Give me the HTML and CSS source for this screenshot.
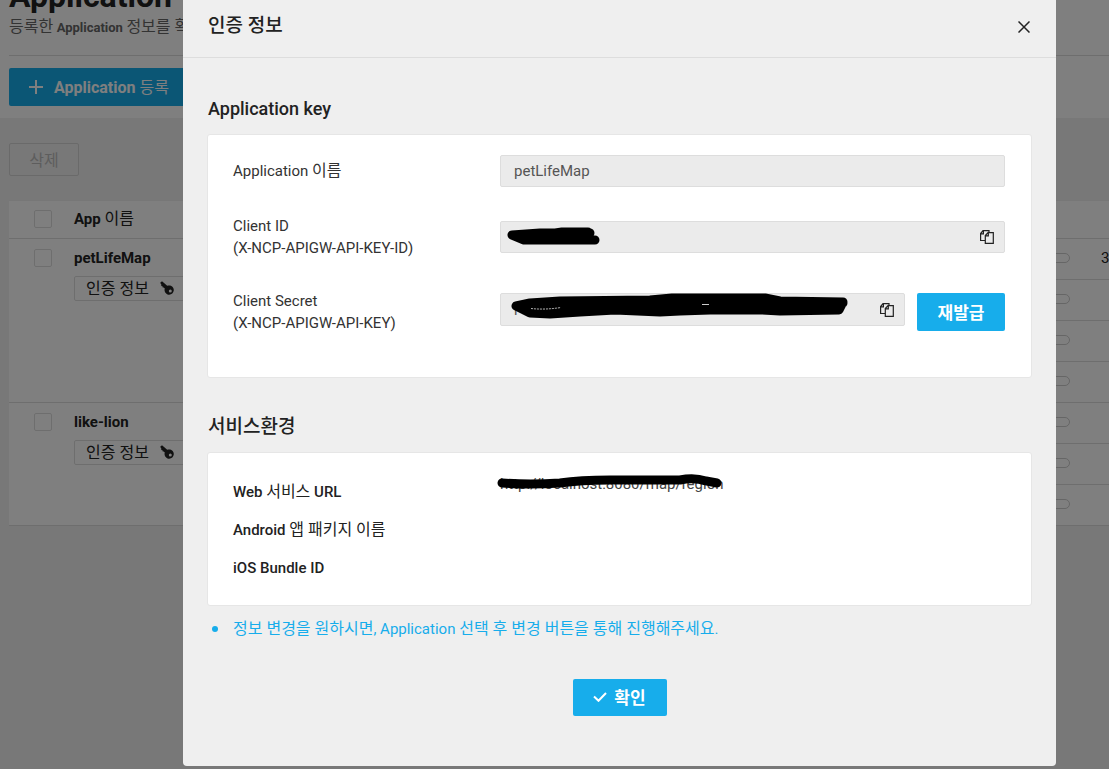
FILE: index.html
```html
<!DOCTYPE html>
<html lang="ko">
<head>
<meta charset="utf-8">
<title>Application</title>
<link rel="stylesheet" href="styles.css">
</head>
<body>
<svg class="sprite" aria-hidden="true">
  <symbol id="copy" viewBox="0 0 14 14">
    <path d="M5 10.500H.6V3.500L3 .7H9V3M.6 3.800H3.400V.7M5.300 13.300V5.500L8 2.700H13.300V13.300ZM5.300 5.900H8.300V2.700" fill="none" stroke="currentColor" stroke-width="1.200"/>
  </symbol>
  <symbol id="key" viewBox="0 0 14 14">
    <path fill="currentColor" fill-rule="evenodd" d="M.2 1.8 2 .2 7.2 4.7C10.800 3.500 14 6 13.800 9.300 13.500 12.500 10.500 14.500 7.500 13.400 4.900 12.400 4 9.800 4.800 7.400L3.700 6.400 2.700 6.600 2.500 5.200 1.200 5.100 1.400 3.700ZM10.300 8.600A1.500 1.500 0 1 0 10.300 11.600 1.500 1.500 0 1 0 10.300 8.600Z"/>
  </symbol>
</svg>

<main class="page">
  <header class="page-head">
    <h1 class="page-title">Application</h1>
    <p class="page-desc"><span class="ko">등록한</span> <b>Application</b> <span class="ko">정보를 확인</span></p>
    <div class="toolbar">
      <button class="btn btn-register" type="button">
        <svg class="icon-plus" viewBox="0 0 14 14" aria-hidden="true"><path d="M7 0V14M0 7H14" stroke="currentColor" stroke-width="2"/></svg>
        <span>Application <span class="regular">등록</span></span>
      </button>
    </div>
  </header>
  <div class="list">
    <button class="btn-delete" type="button" disabled>삭제</button>
    <table class="apps">
      <colgroup><col class="col-check"><col class="col-name"><col><col class="col-usage"><col class="col-count"></colgroup>
      <thead>
        <tr><th><input type="checkbox" class="check" aria-label="전체 선택"></th><th>App <span class="ko">이름</span></th><th></th><th></th><th></th></tr>
      </thead>
      <tbody>
        <tr>
          <td rowspan="4"><input type="checkbox" class="check" aria-label="petLifeMap"></td>
          <td rowspan="4"><div class="app-name">petLifeMap</div><button class="btn-auth" type="button">인증 정보 <svg class="icon-key" aria-hidden="true"><use href="#key"/></svg></button></td>
          <td></td><td><div class="usage"></div></td><td>3</td>
        </tr>
        <tr><td></td><td><div class="usage"></div></td><td></td></tr>
        <tr><td></td><td><div class="usage"></div></td><td></td></tr>
        <tr><td></td><td><div class="usage"></div></td><td></td></tr>
        <tr>
          <td rowspan="3"><input type="checkbox" class="check" aria-label="like-lion"></td>
          <td rowspan="3"><div class="app-name">like-lion</div><button class="btn-auth" type="button">인증 정보 <svg class="icon-key" aria-hidden="true"><use href="#key"/></svg></button></td>
          <td></td><td><div class="usage"></div></td><td></td>
        </tr>
        <tr><td></td><td><div class="usage"></div></td><td></td></tr>
        <tr><td></td><td><div class="usage"></div></td><td></td></tr>
      </tbody>
    </table>
  </div>
</main>

<div class="overlay">
  <section class="modal" role="dialog" aria-labelledby="modal-title">
    <header class="modal-head">
      <h2 class="modal-title" id="modal-title">인증 정보</h2>
      <button class="btn-close" type="button" aria-label="닫기"><svg viewBox="0 0 12 12" aria-hidden="true"><path d="M.5.5 11.500 11.500M11.500.5.5 11.500" stroke="currentColor" stroke-width="1.500"/></svg></button>
    </header>
    <div class="modal-body">
      <h3 class="section-title">Application key</h3>
      <div class="card card-keys">
        <div class="row">
          <label for="app-name">Application <span class="ko">이름</span></label>
          <div class="field"><input class="text" id="app-name" value="petLifeMap" readonly></div>
        </div>
        <div class="row">
          <label for="client-id">Client ID<br>(X-NCP-APIGW-API-KEY-ID)</label>
          <div class="field">
            <input class="text" id="client-id" value="" readonly>
            <svg class="redaction redaction-id" viewBox="0 0 110 32" aria-hidden="true"><path d="M12 14 40 12 90 12M12 14 24 19 95 19M40 16H88M35 15 62 11 88 11" fill="none" stroke="#000" stroke-width="9" stroke-linecap="round" stroke-linejoin="round"/></svg>
            <button class="btn-copy" type="button" aria-label="Client ID 복사"><svg aria-hidden="true"><use href="#copy"/></svg></button>
          </div>
        </div>
        <div class="row row-secret">
          <label for="client-secret">Client Secret<br>(X-NCP-APIGW-API-KEY)</label>
          <div class="secret">
            <div class="field">
              <input class="text" id="client-secret" value="r" readonly>
              <svg class="redaction redaction-secret" viewBox="0 0 360 32" aria-hidden="true">
                <path d="M16 13 30 10 60 8 150 7 172 5 265 5 280 8 343 9 339 17 280 18 262 17 210 17 180 18 160 19 115 17 80 19 50 21 30 20 24 17 16 13ZM24 15 343 10M30 14H280" fill="#000" stroke="#000" stroke-width="9" stroke-linecap="round" stroke-linejoin="round"/>
                <path d="M202 11.500H209" fill="none" stroke="#ccc"/>
                <path d="M31 15.500Q45 17 61 14.500" fill="none" stroke="#bbb" stroke-dasharray="2 1"/>
              </svg>
              <button class="btn-copy" type="button" aria-label="Client Secret 복사"><svg aria-hidden="true"><use href="#copy"/></svg></button>
            </div>
            <button class="btn btn-reissue" type="button">재발급</button>
          </div>
        </div>
      </div>

      <h3 class="section-title section-env">서비스환경</h3>
      <dl class="card card-env">
        <div class="row"><dt>Web <span class="ko">서비스</span> URL</dt>
          <dd>http://localhost:8080/map/region
            <svg class="redaction redaction-url" viewBox="-4 0 230 22" aria-hidden="true"><path d="M2 10Q30 12 60 10 80 7 110 7L180 7Q194 4 206 8L217 10" fill="none" stroke="#000" stroke-width="9" stroke-linecap="round"/></svg>
          </dd></div>
        <div class="row"><dt>Android <span class="ko">앱 패키지 이름</span></dt><dd></dd></div>
        <div class="row"><dt>iOS Bundle ID</dt><dd></dd></div>
      </dl>
      <ul class="notes"><li><span class="ko">정보 변경을 원하시면</span>, Application <span class="ko">선택 후 변경 버튼을 통해 진행해주세요</span>.</li></ul>
      <div class="actions">
        <button class="btn btn-confirm" type="button"><svg class="icon-check" viewBox="0 0 14 10" aria-hidden="true"><path d="M1 4.500 5.500 8.800 13 1" fill="none" stroke="currentColor" stroke-width="2"/></svg>확인</button>
      </div>
    </div>
  </section>
</div>
</body>
</html>
```
FILE: styles.css
```css
* { box-sizing: border-box; }
body, button, input { font-family: Roboto, "Noto Sans CJK KR", sans-serif; font-size: 15px; }
body { margin: 0; height: 100vh; overflow: hidden; background: #f0f0f0; color: #222; line-height: 22px; }
h1, h2, h3, p, dl, dd, ul { margin: 0; padding: 0; }
button { display: inline-flex; align-items: center; justify-content: center; padding: 0; border: 0; color: inherit; white-space: nowrap; }
.sprite { display: none; }
.regular { font-weight: 400; }
.ko { font-size: 16px; line-height: 20px; font-weight: 400; }

.page-head { padding: 0 0 12px 9px; background: #fff; }
.page-title { margin-top: -24px; font-size: 32px; line-height: 40px; font-weight: 700; }
.page-desc { height: 39px; font-size: 14px; line-height: 22px; color: #666; white-space: nowrap; }
.page-desc b { font-size: 13px; }
.toolbar { padding-top: 12px; border-top: 1px solid #ddd; }
.btn { padding-bottom: 2px; border-radius: 2px; background: #17adeb; color: #fff; font-size: 17px; font-weight: 700; }
.btn-register { height: 38px; padding: 0 20px 2px; gap: 11px; font-size: 16px; }
.icon-plus { width: 14px; height: 14px; margin-top: 2px; }
.list { padding: 25px 0 0 9px; }
.btn-delete { width: 70px; height: 33px; padding-bottom: 2px; border: 1px solid #d5d5d5; border-radius: 2px; background: transparent; color: #bbb; font-size: 16px; }

.apps { width: 100%; margin-top: 24px; border-collapse: collapse; table-layout: fixed; background: #fff; border-bottom: 1px solid #ddd; }
.col-check { width: 65px; }
.col-name { width: 200px; }
.col-usage { width: 80px; }
.col-count { width: 8px; }
.apps th, .apps td { padding: 0; text-align: left; border-top: 1px solid #ddd; white-space: nowrap; }
.apps th { height: 38px; padding-bottom: 2px; border-top-color: #eee; font-weight: 700; }
.apps td { height: 41px; padding-bottom: 2px; }
.apps td[rowspan] { vertical-align: top; padding-top: 8px; }
.apps th:first-child, .apps td[rowspan]:first-child { padding-left: 25px; }
.apps td[rowspan]:first-child { padding-top: 10px; }
.check { display: block; appearance: none; width: 18px; height: 18px; margin: 0; border: 1px solid #ddd; border-radius: 2px; background: #fff; }
.app-name { font-weight: 700; }
.btn-auth { height: 25px; margin-top: 7px; padding: 0 20px 4px 11px; gap: 11px; border: 1px solid #ddd; border-radius: 2px; background: #fff; font-size: 16px; }
.icon-key { width: 14px; height: 14px; margin-top: 2px; }
.usage { width: 49px; height: 10px; border: 1px solid #ccc; border-radius: 5px; }

.overlay { position: fixed; inset: 0; padding: 0 53px 3px 183px; background: rgba(0, 0, 0, .5); }
.modal { height: 100%; border-radius: 0 0 4px 4px; background: #efefef; }
.modal-head { display: flex; justify-content: space-between; align-items: center; height: 58px; padding: 0 25px 5px; border-bottom: 1px solid #ddd; }
.modal-title, .section-title { font-size: 18px; line-height: 26px; font-weight: 500; }
.modal-title, .section-env { font-size: 19px; }
.section-title { padding-left: 1px; }
.btn-close { width: 14px; height: 26px; padding-top: 2px; background: none; }
.btn-close svg { width: 12px; height: 12px; }
.modal-body { padding: 38px 24px 0; }
.card { margin-top: 12px; border: 1px solid #e6e6e6; border-radius: 3px; background: #fff; }
.row { display: grid; grid-template-columns: 267px minmax(0, 1fr); align-items: center; }
.row label { color: #333; }
.card-keys { display: grid; gap: 28px; padding: 20px 26px 43px 25px; }
.row-secret { padding-top: 3px; }
.field { position: relative; display: flex; align-items: center; flex: 1; }
.text { width: 100%; height: 32px; padding: 0 13px; border: 1px solid #ddd; border-radius: 2px; background: #ebebeb; color: #555; }
.row-secret .text { height: 33px; }
.btn-copy { position: absolute; right: 11px; background: none; }
.btn-copy svg { width: 14px; height: 14px; }
.secret { display: flex; align-items: flex-start; gap: 12px; }
.btn-reissue { width: 88px; height: 38px; }
.redaction { position: absolute; left: 0; top: 0; pointer-events: none; }
.redaction-id { width: 110px; height: 32px; }
.redaction-secret { width: 360px; height: 32px; }
.redaction-url { left: -4px; width: 230px; height: 22px; }

.section-env { margin-top: 36px; }
.card-env { display: grid; gap: 8px; padding: 20px 26px 26px 25px; }
.card-env .row { align-items: start; }
.card-env dt { padding-top: 8px; font-weight: 500; }
.card-env dd { position: relative; color: #444; }
.notes { margin-top: 12px; color: #17adeb; list-style: none; }
.notes li { display: flex; align-items: center; white-space: pre; }
.notes li::before { content: ""; width: 6px; height: 6px; margin: 0 15px 0 5px; border-radius: 3px; background: currentColor; }
.actions { display: flex; justify-content: center; margin-top: 39px; }
.btn-confirm { width: 94px; height: 37px; gap: 7px; }
.icon-check { width: 14px; height: 10px; }
```
